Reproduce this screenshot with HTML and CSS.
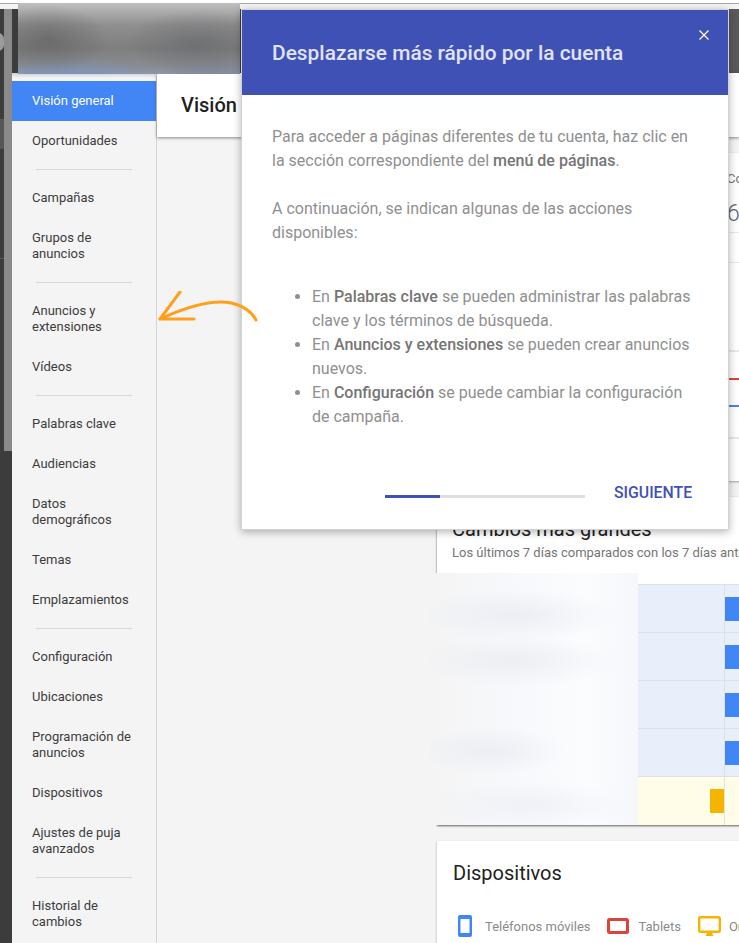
FILE: index.html
```html
<!DOCTYPE html>
<html lang="es">
<head>
<meta charset="utf-8">
<title>Visión general</title>
<link rel="stylesheet" href="styles.css">
</head>
<body>
<div class="page">
  <div class="topstrip"></div>
  <div class="shell">
    <div class="backdrop"><div class="backdrop-panel"></div></div>
    <div class="app">
      <header class="appbar"></header>
      <div class="workspace">
        <nav class="sidebar">
          <a class="nav-item active">Visión general</a>
          <a class="nav-item">Oportunidades</a>
          <hr class="nav-rule">
          <a class="nav-item">Campañas</a>
          <a class="nav-item tall">Grupos de<br>anuncios</a>
          <hr class="nav-rule">
          <a class="nav-item tall">Anuncios y<br>extensiones</a>
          <a class="nav-item">Vídeos</a>
          <hr class="nav-rule">
          <a class="nav-item">Palabras clave</a>
          <a class="nav-item">Audiencias</a>
          <a class="nav-item tall">Datos<br>demográficos</a>
          <a class="nav-item">Temas</a>
          <a class="nav-item">Emplazamientos</a>
          <hr class="nav-rule">
          <a class="nav-item">Configuración</a>
          <a class="nav-item">Ubicaciones</a>
          <a class="nav-item tall">Programación de<br>anuncios</a>
          <a class="nav-item">Dispositivos</a>
          <a class="nav-item tall">Ajustes de puja<br>avanzados</a>
          <hr class="nav-rule">
          <a class="nav-item tall">Historial de<br>cambios</a>
        </nav>
        <main class="main">
          <div class="titlebar"><h1 class="page-title">Visión general</h1></div>
          <div class="content">
            <section class="card card-summary">
              <div class="kpi-label">Conversiones</div>
              <div class="kpi-value">6,00</div>
              <div class="chart">
                <div class="chart-top"></div>
                <div class="chart-line red"></div>
                <div class="chart-line blue"></div>
                <div class="chart-bottom"></div>
              </div>
            </section>
            <section class="card card-changes">
              <div class="card-head">
                <h2 class="card-title">Cambios más grandes</h2>
                <p class="card-sub">Los últimos 7 días comparados con los 7 días anteriores</p>
              </div>
              <div class="rows">
                <div class="row"><div class="cell-name"></div><div class="cell-neg"></div><div class="cell-pos"><span class="bar blue-bar"></span></div></div>
                <div class="row"><div class="cell-name"></div><div class="cell-neg"></div><div class="cell-pos"><span class="bar blue-bar"></span></div></div>
                <div class="row"><div class="cell-name"></div><div class="cell-neg"></div><div class="cell-pos"><span class="bar blue-bar"></span></div></div>
                <div class="row"><div class="cell-name"></div><div class="cell-neg"></div><div class="cell-pos"><span class="bar blue-bar"></span></div></div>
                <div class="row warn"><div class="cell-name"></div><div class="cell-neg"><span class="bar amber-bar"></span></div><div class="cell-pos"></div></div>
              </div>
            </section>
            <section class="card card-devices">
              <h2 class="card-title devices-title">Dispositivos</h2>
              <div class="legend">
                <span class="legend-item legend-phone">
                  <svg class="legend-icon" width="14" height="22" viewBox="0 0 14 22"><rect width="14" height="22" rx="2" fill="#4285f4"/><rect x="2.5" y="4" width="9" height="14" fill="#fff"/></svg>
                  Teléfonos móviles
                </span>
                <span class="legend-item legend-tablet">
                  <svg class="legend-icon" width="22" height="16" viewBox="0 0 22 16"><rect x="1.5" y="1.5" width="19" height="13" rx="1" fill="#fff" stroke="#e04238" stroke-width="3"/></svg>
                  Tablets
                </span>
                <span class="legend-item legend-desktop">
                  <svg class="legend-icon" width="23" height="20" viewBox="0 0 23 20"><rect x="1.2" y="1.2" width="20.6" height="14.6" rx="1.5" fill="#fff" stroke="#f4b400" stroke-width="2.4"/><path d="M9.5 16h4l2 4h-8z" fill="#f4b400"/></svg>
                  Ordenadores
                </span>
              </div>
            </section>
          </div>
        </main>
      </div>
    </div>
  </div>

  <div class="blur-appbar"></div>
  <div class="blur-badge"></div>
  <div class="blur-names"></div>

  <aside class="dialog">
    <div class="dialog-head">
      <h2 class="dialog-title">Desplazarse más rápido por la cuenta</h2>
      <svg class="dialog-close" width="10" height="10" viewBox="0 0 10 10" stroke="#fff" stroke-width="1.3" fill="none"><path d="M.5.5l9 9M9.5.5l-9 9"/></svg>
    </div>
    <div class="dialog-body">
      <p class="dialog-text">Para acceder a páginas diferentes de tu cuenta, haz clic en la sección correspondiente del <b>menú de páginas</b>.</p>
      <p class="dialog-text">A continuación, se indican algunas de las acciones disponibles:</p>
      <ul class="dialog-list">
        <li>En <b>Palabras clave</b> se pueden administrar las palabras clave y los términos de búsqueda.</li>
        <li>En <b>Anuncios y extensiones</b> se pueden crear anuncios nuevos.</li>
        <li>En <b>Configuración</b> se puede cambiar la configuración de campaña.</li>
      </ul>
    </div>
    <div class="dialog-foot">
      <div class="progress"><div class="progress-fill"></div></div>
      <span class="next">SIGUIENTE</span>
    </div>
  </aside>

  <svg class="arrow" width="104" height="40" viewBox="0 0 104 40" fill="none" stroke="#ff9f1c" stroke-width="3" stroke-linecap="round" stroke-linejoin="round">
    <path d="M2 28C26 17 46 11 63 11C79 11 92 18 98 29"/>
    <path d="M22 1L2 28H36"/>
  </svg>
</div>
</body>
</html>
```
FILE: styles.css
```css
* { box-sizing: border-box; }
html, body { margin: 0; padding: 0; }
body { font-family: Roboto, "Liberation Sans", sans-serif; background: #fff; }

.page { position: relative; width: 739px; height: 943px; overflow: hidden; background: #fff; }

.topstrip { height: 6px; margin-top: 3px; border-top: 1px solid #a8a8a8; background: #f4f4f4; }

.shell { display: flex; height: 934px; }
.backdrop {
  width: 12px; flex: none; padding-left: 4px;
  background: linear-gradient(#3c3c3c 0 110px, #565656 110px 140px, #3c3c3c 140px 249px, #5a5a5a 249px 250px, #3c3c3c 250px);
}
.backdrop-panel { width: 8px; height: 442px; background: #8a8a8a; }

.app { flex: 1; min-width: 0; display: flex; flex-direction: column; }
.appbar { height: 64px; flex: none; background: linear-gradient(90deg, #3c3c3c 0 50%, #5a5a5a 50%); }

.workspace { flex: 1; display: flex; min-height: 0; }

.sidebar {
  width: 145px; flex: none; padding-top: 8px;
  background: linear-gradient(#cfcfcf, #f4f4f4 5px);
  border-right: 1px solid #d4d4d4;
}
.nav-item { display: flex; align-items: center; height: 40px; padding-left: 20px; font-size: 13px; line-height: 16px; color: #3c3c3c; }
.nav-item.tall { height: 56px; }
.nav-item.active { background: #4285f4; color: #fff; }
.nav-rule { width: 96px; height: 1px; margin: 8px 0 8px 24px; border: 0; background: #d8d8d8; }

.main { flex: 1; min-width: 0; background: #f4f4f4; display: flex; flex-direction: column; }
.titlebar {
  height: 64px; flex: none; display: flex; align-items: center; padding: 0 0 0 24px;
  background: #fff; box-shadow: 0 1px 3px rgba(0,0,0,.45); position: relative;
}
.page-title { margin: 0; font-size: 20px; font-weight: 500; color: #1f1f1f; white-space: nowrap; }

.content { padding: 16px 0 0 280px; display: flex; flex-direction: column; gap: 16px; }
.card { width: 600px; background: #fff; box-shadow: 0 1px 2px rgba(0,0,0,.35); flex: none; }

.card-summary { height: 328px; padding-top: 18px; padding-left: 290px; }
.kpi-label { font-size: 13px; line-height: 16px; color: #757575; }
.kpi-value { font-size: 23px; line-height: 28px; margin-top: 13px; font-weight: 300; color: #5f6368; }
.chart { margin: 4px 0 0 -290px; border-top: 1px solid #e8e8e8; padding-top: 29px; }
.chart-top { height: 90px; border-top: 1px solid #e8e8e8; border-bottom: 2px solid #e8e8e8; }
.chart-line { height: 2px; }
.chart-line.red { margin-top: 26px; background: #e04238; }
.chart-line.blue { margin-top: 25px; background: #4285f4; }
.chart-bottom { height: 2px; margin-top: 30px; background: #e8e8e8; }

.card-changes { height: 328px; box-shadow: 0 1px 2px rgba(0,0,0,.6); }
.card-head { height: 87px; padding: 19px 15px 0; }
.card-title { margin: 0; font-size: 20px; line-height: 26px; font-weight: 400; color: #212121; white-space: nowrap; }
.card-sub { margin: 3px 0 0; font-size: 13px; line-height: 16px; color: #757575; white-space: nowrap; }

.rows { height: 241px; }
.row { display: flex; height: 48px; border-top: 1px solid #e0e0e0; background: #e8effb; }
.row.warn { height: 49px; background: #fffde7; }
.cell-name { width: 201px; background: #fff; flex: none; }
.cell-neg { width: 86px; flex: none; display: flex; justify-content: flex-end; align-items: center; }
.cell-pos { flex: 1; display: flex; align-items: center; border-left: 1px solid #e0e0e0; }
.bar { display: block; height: 24px; width: 14px; }
.blue-bar { background: #4285f4; }
.amber-bar { background: #f4b400; }

.card-devices { height: 200px; padding: 19px 16px 0; }
.devices-title { line-height: 26px; }
.legend { display: flex; align-items: center; margin-top: 29px; padding-left: 5px; font-size: 13px; color: #8a8a8a; white-space: nowrap; }
.legend-item { display: inline-flex; align-items: center; }
.legend-phone { margin-right: 17px; }
.legend-tablet { margin-right: 17px; }
.legend-icon { margin-right: 10px; flex: none; }
.legend-phone .legend-icon { margin-right: 13px; }
.legend-tablet .legend-icon { margin-right: 9px; }
.legend-desktop .legend-icon { margin-right: 8px; }

.blur-appbar {
  position: absolute; left: 18px; top: 3px; width: 222px; height: 71px;
  background:
    radial-gradient(ellipse 60px 34px at 30px 36px, rgba(85,85,85,.5), transparent),
    radial-gradient(ellipse 70px 34px at 180px 40px, rgba(95,97,102,.5), transparent),
    radial-gradient(ellipse 100px 18px at 50px 74px, rgba(110,150,215,.55), transparent),
    radial-gradient(ellipse 70px 16px at 205px 74px, rgba(110,125,165,.45), transparent),
    linear-gradient(#bfbfbf, #8f8f8f 22px, #7e7e7e 45px, #8a8d92 64px, #8f96a6);
}
.blur-badge { position: absolute; left: -8px; top: 33px; width: 12px; height: 18px; border-radius: 6px; background: #9b9b9b; }
.blur-names {
  position: absolute; left: 430px; top: 573px; width: 208px; height: 252px;
  background:
    radial-gradient(ellipse 100px 26px at 85px 42px, rgba(232,235,242,.8), transparent),
    radial-gradient(ellipse 100px 26px at 85px 88px, rgba(233,235,240,.75), transparent),
    radial-gradient(ellipse 75px 24px at 60px 178px, rgba(232,235,242,.8), transparent),
    radial-gradient(ellipse 100px 24px at 100px 232px, rgba(236,239,245,.8), transparent),
    linear-gradient(90deg, #f4f4f4 0, #f7f8fb 35%, #fbfcfe 75%, #f6f7fa);
}

.arrow { position: absolute; left: 158px; top: 291px; }

.dialog {
  position: absolute; left: 241px; top: 9px; width: 488px; height: 521px;
  background: #fff; border: 1px solid #d2d2d2;
  box-shadow: 0 2px 8px rgba(0,0,0,.3);
  display: flex; flex-direction: column;
}
.dialog-head { position: relative; height: 85px; flex: none; background: #3f51b5; padding: 30px 30px 0; }
.dialog-title { margin: 0; font-size: 20.9px; line-height: 26px; font-weight: 500; color: #e0e3f4; white-space: nowrap; }
.dialog-close { position: absolute; right: 19px; top: 20px; }

.dialog-body { flex: 1; padding: 30px 30px 0; font-size: 16px; line-height: 24px; color: #8f8f8f; }
.dialog-text { margin: 0 0 24px; }
.dialog-list { margin: 40px 0 0; padding: 0 0 0 40px; }
.dialog-body b { font-weight: 500; color: #757575; }

.dialog-foot { height: 74px; flex: none; display: flex; align-items: flex-start; padding: 0 0 0 143px; }
.progress { width: 200px; height: 3px; margin-top: 40px; background: #dedede; flex: none; }
.progress-fill { width: 55px; height: 3px; background: #3f51b5; }
.next { margin: 28px 0 0 29px; font-size: 15.8px; line-height: 20px; font-weight: 500; color: #3f51b5; white-space: nowrap; }
```
